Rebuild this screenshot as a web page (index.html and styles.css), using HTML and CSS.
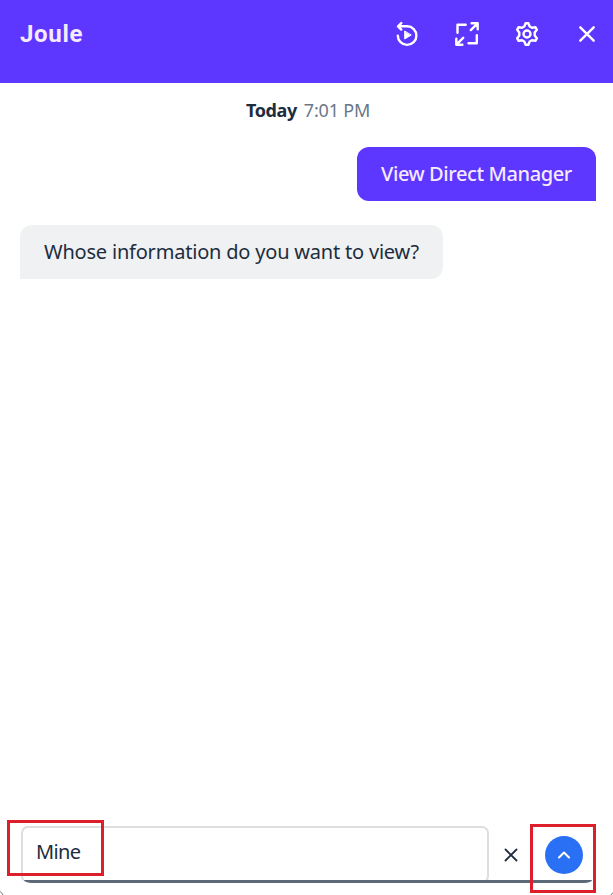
FILE: index.html
```html
<!DOCTYPE html>
<html lang="en">
<head>
<meta charset="utf-8">
<title>Joule</title>
<link rel="stylesheet" href="styles.css">
</head>
<body>
<div class="panel">
  <header class="header">
    <h1 class="title">Joule</h1>
    <nav class="actions">
      <svg class="icon" viewBox="0 0 28 28"><path d="M8.300 3.100 5 6.300l3.300 3.300M5.300 6.300h8.900a9.300 9.300 0 1 1-9.400 9.300"/><path class="solid" d="M11.700 11.400v7.500l6.200-3.700z"/></svg>
      <svg class="icon" viewBox="0 0 28 28"><path d="M4.500 12.700V4.800h8.200M23.800 15.200v8.100h-8.300M18.600 3.200h6.100v6.100M24.400 3.500l-6.600 6.600M9.400 24.700H3.300v-6M3.600 24.400l6.600-6.600"/></svg>
      <svg class="icon" viewBox="0 0 28 28"><path d="M12.600 3.300h2.800l1.300 3.200 2.200 1.200 3.500-.5 1.400 2.500-2.100 2.700v3.200l2.100 2.700-1.400 2.500-3.500-.5-2.200 1.200-1.300 3.200h-2.800l-1.300-3.200-2.200-1.200-3.500.5-1.400-2.500 2.100-2.700v-3.200L4.200 9.700l1.400-2.500 3.500.5 2.200-1.200z"/><circle cx="14" cy="14" r="3.500"/></svg>
      <svg class="icon" viewBox="0 0 28 28"><path d="m7.300 7.300 13.400 13.400M20.700 7.300 7.300 20.700"/></svg>
    </nav>
  </header>
  <main class="chat">
    <div class="stamp"><b class="day">Today</b><span class="time">7:01 PM</span></div>
    <div class="bubble user">View Direct Manager</div>
    <div class="bubble bot">Whose information do you want to view?</div>
  </main>
  <footer class="composer">
    <div class="field"><span class="mine">Mine</span></div>
    <svg class="clear" viewBox="0 0 14 14"><path d="m1.500 1.500 11 11M12.500 1.500l-11 11"/></svg>
    <div class="send"><svg viewBox="0 0 38 38"><path d="m14 21.500 5-5 5 5"/></svg></div>
    <div class="underline"></div>
  </footer>
  <div class="mark mark-field"></div>
  <div class="mark mark-send"></div>
  <svg class="corner corner-left" viewBox="0 0 5 5"><path d="M0 1.500Q2 2.500 3 5"/></svg>
  <svg class="corner corner-right" viewBox="0 0 5 5"><path d="M3 5 5 2.500"/></svg>
</div>
</body>
</html>
```
FILE: styles.css
```css
* { box-sizing: border-box; }
body { margin: 0; font-family: "Noto Sans", sans-serif; background: #fff; color: #1d2d3e; }
.panel { position: relative; width: 613px; height: 895px; overflow: hidden; display: flex; flex-direction: column; }
.header { height: 83px; flex: none; display: flex; align-items: flex-start; justify-content: space-between; padding: 20px 12px 0 20px; background: #5d36ff; color: #f6eaff; }
.title { margin: 0; font-family: Roboto, "Noto Sans", sans-serif; font-size: 24px; line-height: 29px; font-weight: 700; letter-spacing: 0.7px; }
.actions { display: flex; gap: 32px; }
.icon { width: 28px; height: 28px; fill: none; stroke: #fff; stroke-width: 2.4; stroke-linecap: round; stroke-linejoin: round; }
.icon .solid { fill: #fff; stroke-width: 1; }
.chat { flex: 1; display: flex; flex-direction: column; padding: 15px 17px 0 20px; }
.stamp { display: flex; gap: 7px; padding-left: 226px; height: 24px; line-height: 24px; font-size: 18px; white-space: nowrap; }
.day { font-weight: 700; letter-spacing: -0.4px; }
.time { color: #6a7787; letter-spacing: -0.2px; }
.bubble { height: 54px; line-height: 54px; padding: 0 24px; font-size: 20px; white-space: nowrap; }
.user { align-self: flex-end; width: 239px; margin-top: 25px; background: #5d36ff; color: #f6eaff; border-radius: 12px 12px 0 12px; font-weight: 500; letter-spacing: -0.4px; }
.bot { align-self: flex-start; width: 423px; margin-top: 24px; background: #eff1f2; border-radius: 12px 12px 12px 0; letter-spacing: -0.2px; }
.composer { position: relative; height: 69px; flex: none; display: flex; padding-left: 21px; }
.field { width: 468px; height: 57px; padding-left: 13px; border: 2px solid #dcdedf; border-bottom-color: transparent; border-radius: 7px; line-height: 47px; font-size: 20px; }
.mine { letter-spacing: -0.6px; }
.clear { width: 14px; height: 14px; margin: 22px 0 0 15px; fill: none; stroke: #1d2d3e; stroke-width: 1.8; stroke-linecap: round; }
.send { width: 38px; height: 38px; margin: 10px 0 0 27px; border-radius: 50%; background: #2a70f5; }
.send svg { display: block; width: 38px; height: 38px; fill: none; stroke: #fff; stroke-width: 2; stroke-linecap: round; stroke-linejoin: round; }
.underline { position: absolute; left: 24px; top: 54px; width: 568px; height: 3px; background: #5b6877; border-radius: 0 0 8px 8px / 0 0 3px 3px; }
.mark { position: absolute; border: 3px solid #dc1f2a; }
.mark-field { left: 7px; top: 820px; width: 97px; height: 56px; }
.mark-send { left: 530px; top: 824px; width: 66px; height: 69px; }
.corner { position: absolute; bottom: 0; width: 5px; height: 5px; fill: none; stroke: #777; }
.corner-left { left: 0; }
.corner-right { right: 0; }
```
